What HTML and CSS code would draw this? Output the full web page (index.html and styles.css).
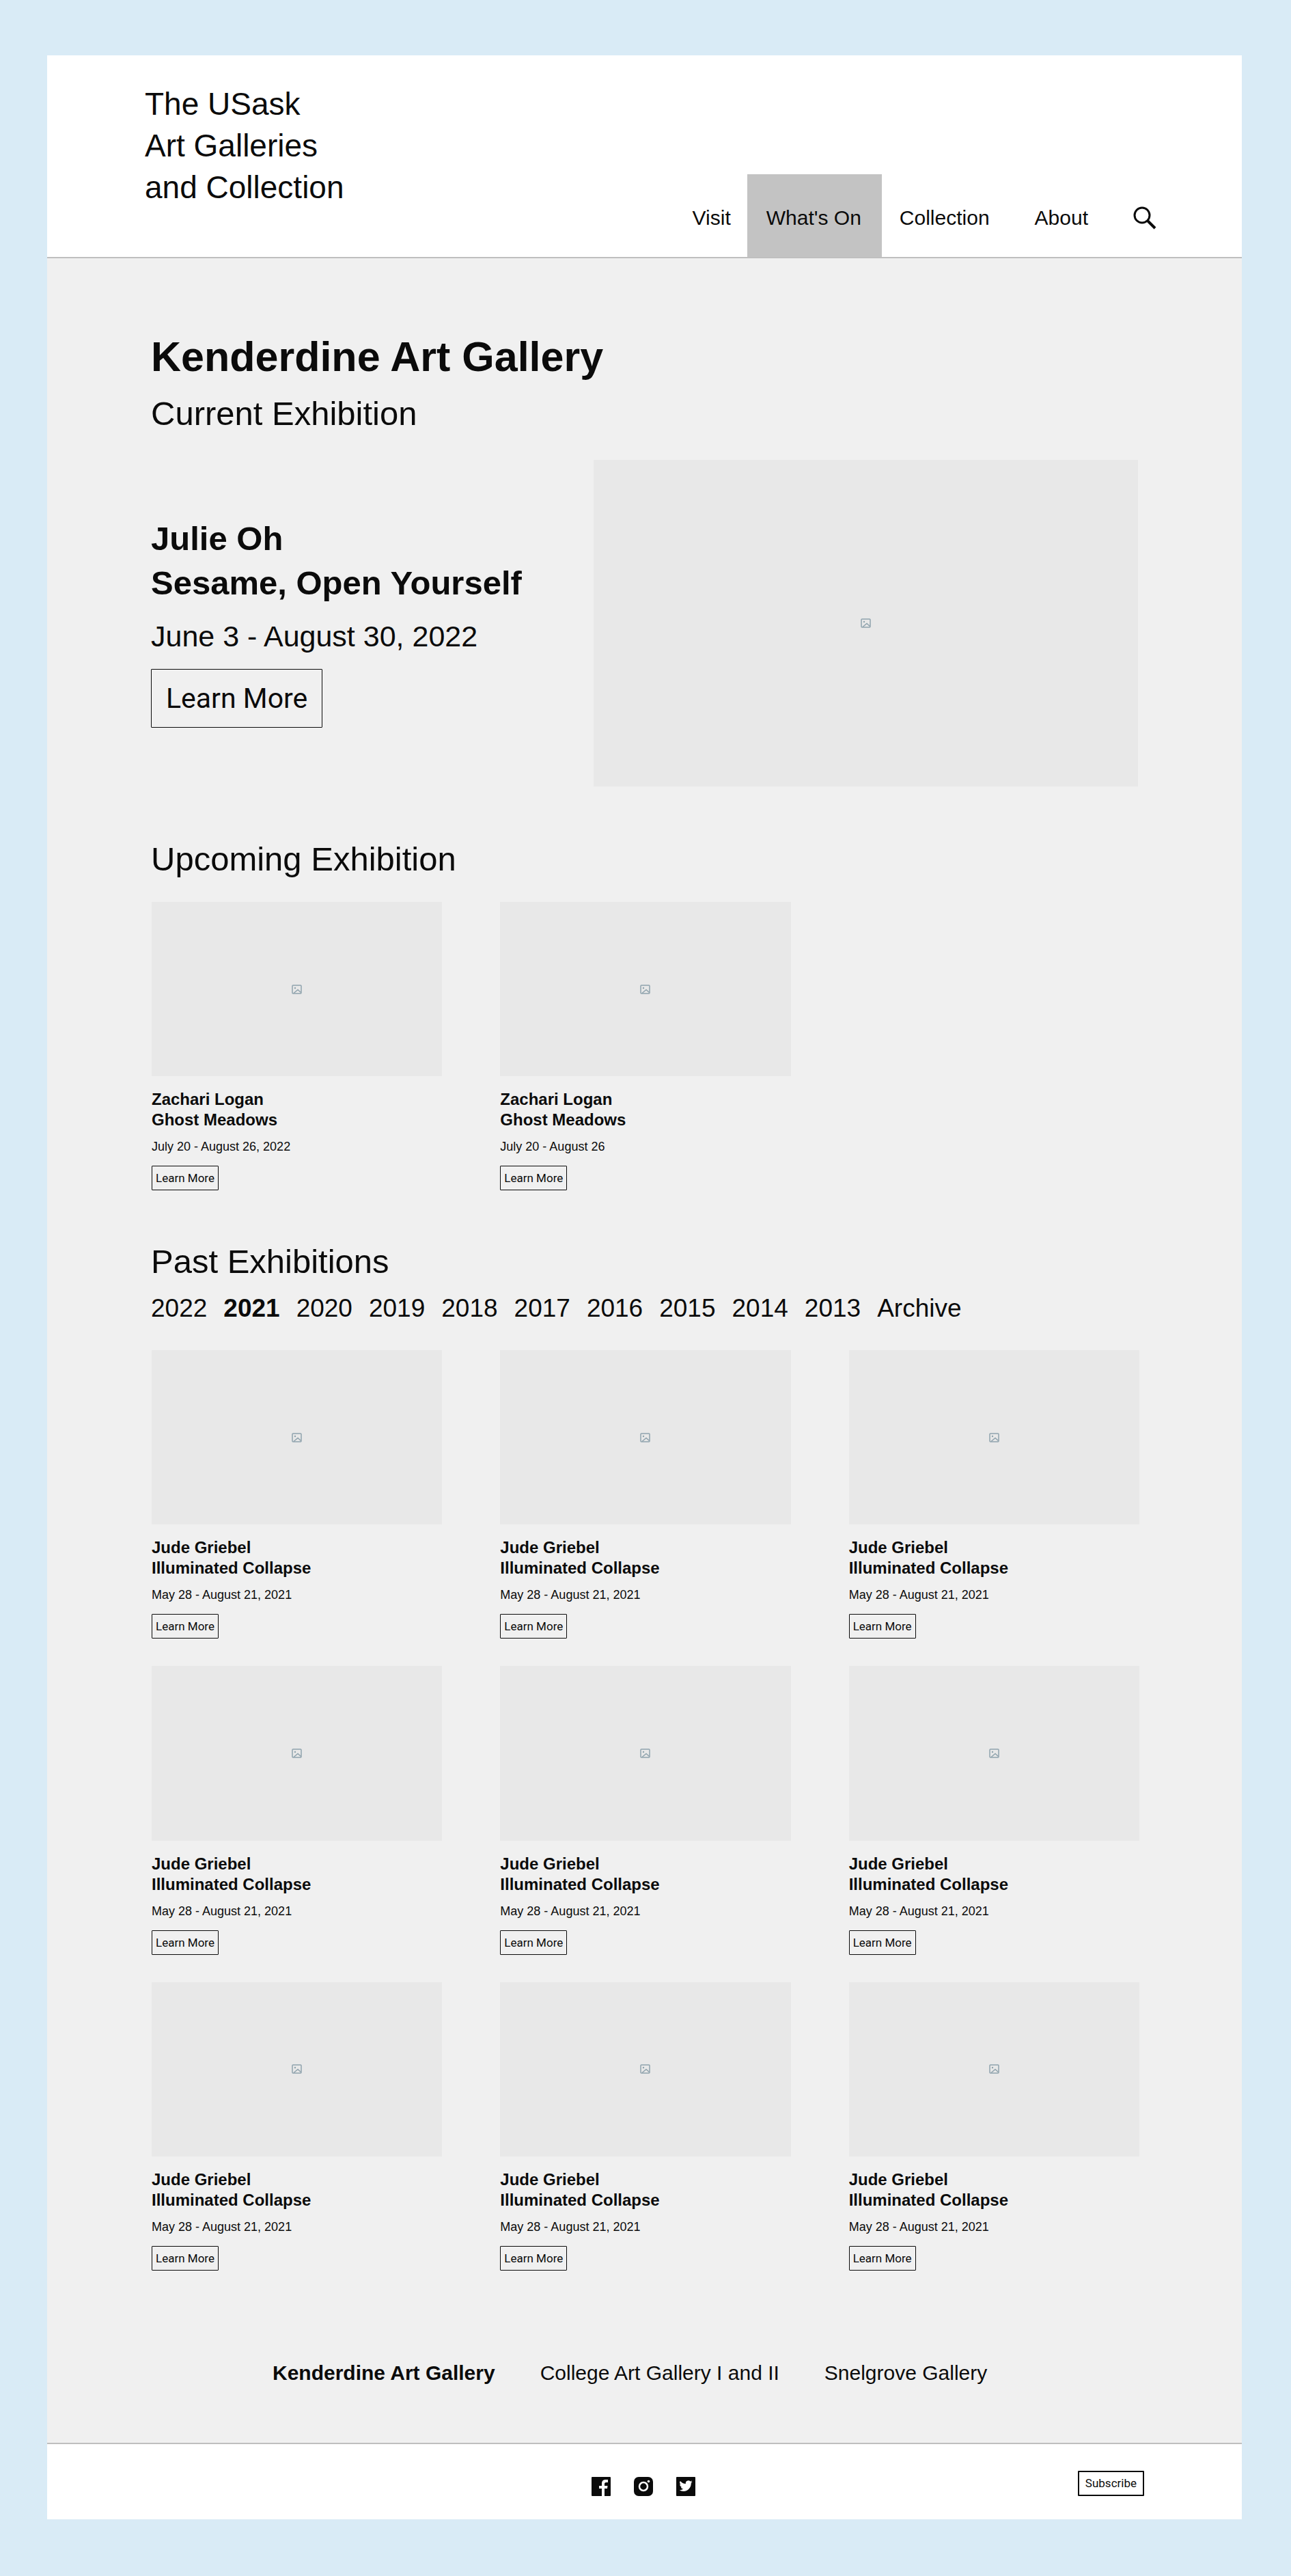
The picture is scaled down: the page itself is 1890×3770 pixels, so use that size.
FILE: index.html
```html
<!DOCTYPE html>
<html lang="en">
<head>
  <meta charset="utf-8">
  <meta name="viewport" content="width=device-width, initial-scale=1">
  <title>Kenderdine Art Gallery</title>
  <link rel="stylesheet" href="styles.css">
</head>
<body>
  <svg class="sprite" aria-hidden="true">
    <symbol id="picture" viewBox="0 0 15 14">
      <rect x="1" y="1" width="13" height="12" rx="1" fill="none" stroke="#8fa3ad" stroke-width="1.5"/>
      <circle cx="5" cy="5" r="1.2" fill="#8fa3ad"/>
      <path d="M3 12.500 9 7.500l4.500 4" fill="none" stroke="#8fa3ad" stroke-width="1.500"/>
    </symbol>
  </svg>
  <div class="page">
    <header class="header">
      <a class="brand" href="#">The USask<br>Art Galleries<br>and Collection</a>
      <nav class="nav" aria-label="Main">
        <a class="nav-link" href="#">Visit</a>
        <a class="nav-link nav-link-active" href="#" aria-current="page">What's On</a>
        <a class="nav-link" href="#">Collection</a>
        <a class="nav-link nav-link-spaced" href="#">About</a>
        <button class="search" type="button" aria-label="Search">
          <svg width="34" height="34" viewBox="0 0 34 34" fill="none" stroke="#0b0b0b" stroke-width="3"><circle cx="13" cy="13" r="11"/><path d="M20.500 20.500 32 32" stroke-width="4"/></svg>
        </button>
      </nav>
    </header>

    <main class="main">
      <h1 class="title">Kenderdine Art Gallery</h1>
      <section>
        <h2 class="heading">Current Exhibition</h2>
        <div class="hero">
          <div class="hero-text">
            <h3 class="hero-title">Julie Oh<br>Sesame, Open Yourself</h3>
            <p class="hero-date">June 3 - August 30, 2022</p>
            <button class="button button-large" type="button">Learn More</button>
          </div>
          <div class="picture hero-picture"><svg class="picture-icon"><use href="#picture"/></svg></div>
        </div>
      </section>

      <section class="upcoming">
        <h2 class="heading">Upcoming Exhibition</h2>
        <div class="cards">
          <article class="card">
            <div class="picture"><svg class="picture-icon"><use href="#picture"/></svg></div>
            <h3 class="card-title">Zachari Logan<br>Ghost Meadows</h3>
            <p class="card-date">July 20 - August 26, 2022</p>
            <button class="button" type="button">Learn More</button>
          </article>
          <article class="card">
            <div class="picture"><svg class="picture-icon"><use href="#picture"/></svg></div>
            <h3 class="card-title">Zachari Logan<br>Ghost Meadows</h3>
            <p class="card-date">July 20 - August 26</p>
            <button class="button" type="button">Learn More</button>
          </article>
        </div>
      </section>

      <section class="past">
        <h2 class="heading">Past Exhibitions</h2>
        <nav class="years" aria-label="Years">
          <a href="#">2022</a>
          <a class="current" href="#" aria-current="true">2021</a>
          <a href="#">2020</a>
          <a href="#">2019</a>
          <a href="#">2018</a>
          <a href="#">2017</a>
          <a href="#">2016</a>
          <a href="#">2015</a>
          <a href="#">2014</a>
          <a href="#">2013</a>
          <a href="#">Archive</a>
        </nav>
        <div class="cards">
          <article class="card">
            <div class="picture"><svg class="picture-icon"><use href="#picture"/></svg></div>
            <h3 class="card-title">Jude Griebel<br>Illuminated Collapse</h3>
            <p class="card-date">May 28 - August 21, 2021</p>
            <button class="button" type="button">Learn More</button>
          </article>
          <article class="card">
            <div class="picture"><svg class="picture-icon"><use href="#picture"/></svg></div>
            <h3 class="card-title">Jude Griebel<br>Illuminated Collapse</h3>
            <p class="card-date">May 28 - August 21, 2021</p>
            <button class="button" type="button">Learn More</button>
          </article>
          <article class="card">
            <div class="picture"><svg class="picture-icon"><use href="#picture"/></svg></div>
            <h3 class="card-title">Jude Griebel<br>Illuminated Collapse</h3>
            <p class="card-date">May 28 - August 21, 2021</p>
            <button class="button" type="button">Learn More</button>
          </article>
          <article class="card">
            <div class="picture"><svg class="picture-icon"><use href="#picture"/></svg></div>
            <h3 class="card-title">Jude Griebel<br>Illuminated Collapse</h3>
            <p class="card-date">May 28 - August 21, 2021</p>
            <button class="button" type="button">Learn More</button>
          </article>
          <article class="card">
            <div class="picture"><svg class="picture-icon"><use href="#picture"/></svg></div>
            <h3 class="card-title">Jude Griebel<br>Illuminated Collapse</h3>
            <p class="card-date">May 28 - August 21, 2021</p>
            <button class="button" type="button">Learn More</button>
          </article>
          <article class="card">
            <div class="picture"><svg class="picture-icon"><use href="#picture"/></svg></div>
            <h3 class="card-title">Jude Griebel<br>Illuminated Collapse</h3>
            <p class="card-date">May 28 - August 21, 2021</p>
            <button class="button" type="button">Learn More</button>
          </article>
          <article class="card">
            <div class="picture"><svg class="picture-icon"><use href="#picture"/></svg></div>
            <h3 class="card-title">Jude Griebel<br>Illuminated Collapse</h3>
            <p class="card-date">May 28 - August 21, 2021</p>
            <button class="button" type="button">Learn More</button>
          </article>
          <article class="card">
            <div class="picture"><svg class="picture-icon"><use href="#picture"/></svg></div>
            <h3 class="card-title">Jude Griebel<br>Illuminated Collapse</h3>
            <p class="card-date">May 28 - August 21, 2021</p>
            <button class="button" type="button">Learn More</button>
          </article>
          <article class="card">
            <div class="picture"><svg class="picture-icon"><use href="#picture"/></svg></div>
            <h3 class="card-title">Jude Griebel<br>Illuminated Collapse</h3>
            <p class="card-date">May 28 - August 21, 2021</p>
            <button class="button" type="button">Learn More</button>
          </article>
        </div>
      </section>

      <nav class="galleries" aria-label="Galleries">
        <a class="current" href="#" aria-current="page">Kenderdine Art Gallery</a>
        <a href="#">College Art Gallery I and II</a>
        <a href="#">Snelgrove Gallery</a>
      </nav>
    </main>

    <footer class="footer">
      <div class="social">
        <a href="#" aria-label="Facebook">
          <svg width="28" height="28" viewBox="0 0 28 28"><rect width="28" height="28" rx="1" fill="#0b0b0b"/><path fill="#fff" d="M15 28V17h-4v-4h4v-3c0-4 2-6 5.500-6H24v4h-2.500C19.500 8 19 9 19 10.500V13h4.500l-.5 4h-4v11z"/></svg>
        </a>
        <a href="#" aria-label="Instagram">
          <svg width="28" height="28" viewBox="0 0 28 28"><rect width="28" height="28" rx="7" fill="#0b0b0b"/><circle cx="14" cy="14" r="6" fill="none" stroke="#fff" stroke-width="2.500"/><circle cx="21.500" cy="6.500" r="1.800" fill="#fff"/></svg>
        </a>
        <a href="#" aria-label="Twitter">
          <svg width="28" height="28" viewBox="0 0 28 28"><rect width="28" height="28" rx="1" fill="#0b0b0b"/><path fill="#fff" transform="translate(4.500 3.500) scale(.8)" d="M23.950 4.570a10 10 0 0 1-2.820.770 4.960 4.960 0 0 0 2.160-2.720c-.950.560-2 .960-3.130 1.180a4.920 4.920 0 0 0-8.380 4.480C7.690 8.100 4.070 6.130 1.640 3.160a4.930 4.930 0 0 0 1.520 6.570 4.900 4.900 0 0 1-2.230-.610v.060a4.920 4.920 0 0 0 3.950 4.830 5 5 0 0 1-2.210.080 4.940 4.940 0 0 0 4.600 3.420A9.870 9.870 0 0 1 0 19.540a13.990 13.990 0 0 0 7.550 2.210c9.050 0 14-7.500 14-13.980l-.020-.630a10 10 0 0 0 2.420-2.570z"/></svg>
        </a>
      </div>
      <button class="button button-subscribe" type="button">Subscribe</button>
    </footer>
  </div>
</body>
</html>
```
FILE: styles.css
```css
* {
  box-sizing: border-box;
}

body {
  margin: 0;
  padding: 81px 72px 83px 69px;
  background: #d9ebf6;
  color: #0b0b0b;
  font-family: "Liberation Sans", Arial, sans-serif;
}

h1,
h2,
h3,
p {
  margin: 0;
}

a {
  color: inherit;
  text-decoration: none;
}

.sprite {
  display: none;
}

.page {
  background: #f0f0f0;
}

/* Header */
.header {
  display: flex;
  justify-content: space-between;
  align-items: flex-end;
  padding: 41px 125px 0 143px;
  background: #fff;
  border-bottom: 2px solid #bfbfbf;
}

.brand {
  padding-bottom: 71px;
  font-size: 46px;
  line-height: 61px;
}

.nav {
  display: flex;
  align-items: flex-end;
}

.nav-link {
  padding: 46px 26px 39px;
  font-size: 30px;
  line-height: 36px;
}

.nav-link:first-child {
  padding-right: 24px;
}

.nav-link-active {
  padding-left: 28px;
  padding-right: 30px;
  background: #c3c3c3;
}

.nav-link-spaced {
  padding-left: 40px;
  padding-right: 40px;
}

.search {
  margin: 0 0 40px 26px;
  padding: 0;
  border: 0;
  background: none;
}

.search svg,
.social svg {
  display: block;
}

/* Content */
.main {
  padding: 109px 150px 84px 152px;
}

.title {
  margin-bottom: 19px;
  font-size: 61px;
  line-height: 70px;
}

.heading {
  font-size: 49px;
  font-weight: 400;
  line-height: 58px;
}

.hero {
  display: flex;
  justify-content: space-between;
  align-items: center;
  margin-top: 39px;
  padding-right: 2px;
}

.hero-text {
  padding-bottom: 4px;
}

.hero-title {
  font-size: 49px;
  line-height: 65px;
}

.hero-date {
  margin: 17px 0 20px;
  font-size: 43px;
  line-height: 56px;
}

.picture {
  display: flex;
  justify-content: center;
  align-items: center;
  aspect-ratio: 5 / 3;
  background: #e8e8e8;
}

.picture-icon {
  width: 15px;
  height: 14px;
}

.hero-picture {
  width: calc(55% + 2px);
}

.upcoming {
  margin-top: 77px;
}

.upcoming .cards {
  margin-top: 34px;
}

.past {
  margin-top: 75px;
}

.past .cards {
  margin-top: 39px;
}

.cards {
  display: grid;
  grid-template-columns: repeat(3, 1fr);
  gap: 40px 85px;
  padding-left: 1px;
}

.card-title {
  margin-top: 19px;
  font-size: 24px;
  line-height: 30px;
}

.card-date {
  margin: 13px 0 17px;
  font-size: 18px;
  line-height: 22px;
}

.button {
  display: block;
  height: 36px;
  padding: 0 5px;
  border: 1px solid #0b0b0b;
  border-radius: 1px;
  background: transparent;
  color: inherit;
  font-family: Roboto, sans-serif;
  font-size: 17px;
  line-height: 20px;
}

.button-large {
  height: 86px;
  padding: 0 21px;
  font-size: 41px;
  line-height: 48px;
}

.years {
  display: flex;
  flex-wrap: wrap;
  gap: 24px;
  margin-top: 18px;
  font-size: 37px;
  line-height: 44px;
}

.current {
  font-weight: 700;
}

.galleries {
  display: flex;
  flex-wrap: wrap;
  gap: 66px;
  margin: 132px 0 0 178px;
  font-size: 30px;
  line-height: 36px;
}

/* Footer */
.footer {
  display: grid;
  grid-template-columns: 1fr auto 1fr;
  align-items: end;
  padding: 39px 143px 34px 139px;
  background: #fff;
  border-top: 2px solid #bfbfbf;
}

.social {
  display: flex;
  grid-column: 2;
  gap: 34px;
}

.button-subscribe {
  justify-self: end;
  height: 37px;
  padding: 0 9px;
  border-width: 2px;
}
```
